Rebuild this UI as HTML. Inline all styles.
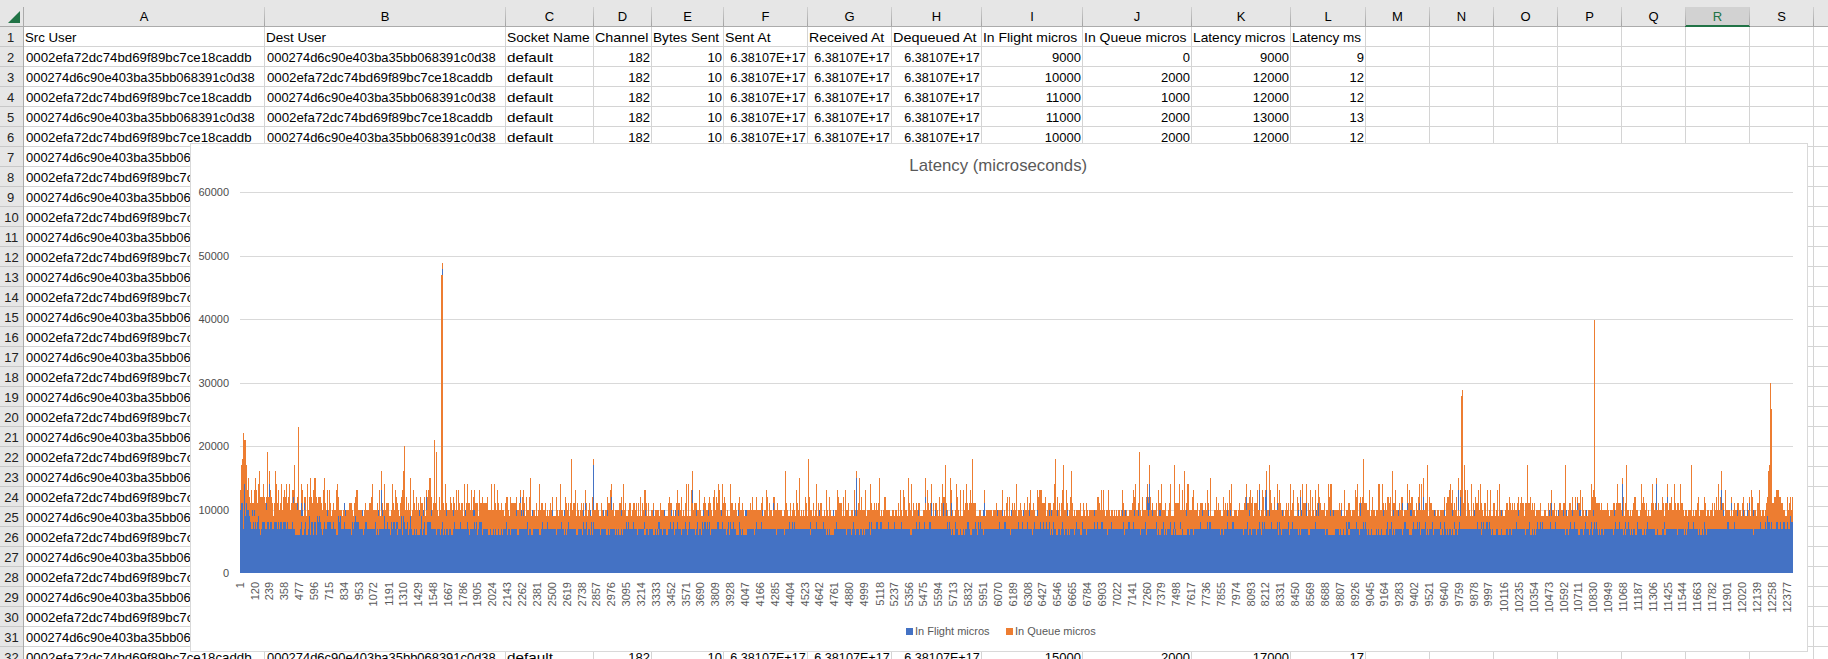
<!DOCTYPE html><html><head><meta charset="utf-8"><style>
html,body{margin:0;padding:0;}
body{width:1828px;height:659px;overflow:hidden;position:relative;background:#fff;font-family:"Liberation Sans",sans-serif;}
.a{position:absolute;}
.t{position:absolute;font-size:13px;line-height:15px;white-space:nowrap;color:#000;}
.l{transform-origin:0 0;}
.r{transform-origin:100% 0;}
.ch{position:absolute;font-size:13px;line-height:15px;color:#222;text-align:center;}
.rh{position:absolute;left:0;width:23px;font-size:13px;line-height:15px;color:#222;text-align:center;}
</style></head><body>
<div class="a" style="left:0;top:0;width:1828px;height:26px;background:#e6e6e6"></div>
<div class="a" style="left:0;top:26px;width:1828px;height:1px;background:#ababab"></div>
<div class="a" style="left:1686px;top:7px;width:63px;height:19px;background:#d2d2d2"></div>
<div class="a" style="left:1685px;top:25px;width:65px;height:2px;background:#217346"></div>
<div class="a" style="left:0;top:27px;width:23px;height:632px;background:#e6e6e6"></div>
<div class="a" style="left:23px;top:7px;width:1px;height:652px;background:#ababab"></div>
<svg class="a" style="left:0;top:0" width="23" height="26"><polygon points="8,23 20,23 20,11" fill="#217346"/></svg>
<div class="a" style="left:264px;top:7px;width:1px;height:19px;background:linear-gradient(#d0d0d0,#a3a3a3)"></div>
<div class="a" style="left:505px;top:7px;width:1px;height:19px;background:linear-gradient(#d0d0d0,#a3a3a3)"></div>
<div class="a" style="left:593px;top:7px;width:1px;height:19px;background:linear-gradient(#d0d0d0,#a3a3a3)"></div>
<div class="a" style="left:651px;top:7px;width:1px;height:19px;background:linear-gradient(#d0d0d0,#a3a3a3)"></div>
<div class="a" style="left:723px;top:7px;width:1px;height:19px;background:linear-gradient(#d0d0d0,#a3a3a3)"></div>
<div class="a" style="left:807px;top:7px;width:1px;height:19px;background:linear-gradient(#d0d0d0,#a3a3a3)"></div>
<div class="a" style="left:891px;top:7px;width:1px;height:19px;background:linear-gradient(#d0d0d0,#a3a3a3)"></div>
<div class="a" style="left:981px;top:7px;width:1px;height:19px;background:linear-gradient(#d0d0d0,#a3a3a3)"></div>
<div class="a" style="left:1082px;top:7px;width:1px;height:19px;background:linear-gradient(#d0d0d0,#a3a3a3)"></div>
<div class="a" style="left:1191px;top:7px;width:1px;height:19px;background:linear-gradient(#d0d0d0,#a3a3a3)"></div>
<div class="a" style="left:1290px;top:7px;width:1px;height:19px;background:linear-gradient(#d0d0d0,#a3a3a3)"></div>
<div class="a" style="left:1365px;top:7px;width:1px;height:19px;background:linear-gradient(#d0d0d0,#a3a3a3)"></div>
<div class="a" style="left:1429px;top:7px;width:1px;height:19px;background:linear-gradient(#d0d0d0,#a3a3a3)"></div>
<div class="a" style="left:1493px;top:7px;width:1px;height:19px;background:linear-gradient(#d0d0d0,#a3a3a3)"></div>
<div class="a" style="left:1557px;top:7px;width:1px;height:19px;background:linear-gradient(#d0d0d0,#a3a3a3)"></div>
<div class="a" style="left:1621px;top:7px;width:1px;height:19px;background:linear-gradient(#d0d0d0,#a3a3a3)"></div>
<div class="a" style="left:1685px;top:7px;width:1px;height:19px;background:linear-gradient(#d0d0d0,#a3a3a3)"></div>
<div class="a" style="left:1749px;top:7px;width:1px;height:19px;background:linear-gradient(#d0d0d0,#a3a3a3)"></div>
<div class="a" style="left:1813px;top:7px;width:1px;height:19px;background:linear-gradient(#d0d0d0,#a3a3a3)"></div>
<div class="ch" style="left:24px;width:240px;top:9px;color:#000">A</div>
<div class="ch" style="left:265px;width:240px;top:9px;color:#000">B</div>
<div class="ch" style="left:506px;width:87px;top:9px;color:#000">C</div>
<div class="ch" style="left:594px;width:57px;top:9px;color:#000">D</div>
<div class="ch" style="left:652px;width:71px;top:9px;color:#000">E</div>
<div class="ch" style="left:724px;width:83px;top:9px;color:#000">F</div>
<div class="ch" style="left:808px;width:83px;top:9px;color:#000">G</div>
<div class="ch" style="left:892px;width:89px;top:9px;color:#000">H</div>
<div class="ch" style="left:982px;width:100px;top:9px;color:#000">I</div>
<div class="ch" style="left:1083px;width:108px;top:9px;color:#000">J</div>
<div class="ch" style="left:1192px;width:98px;top:9px;color:#000">K</div>
<div class="ch" style="left:1291px;width:74px;top:9px;color:#000">L</div>
<div class="ch" style="left:1366px;width:63px;top:9px;color:#000">M</div>
<div class="ch" style="left:1430px;width:63px;top:9px;color:#000">N</div>
<div class="ch" style="left:1494px;width:63px;top:9px;color:#000">O</div>
<div class="ch" style="left:1558px;width:63px;top:9px;color:#000">P</div>
<div class="ch" style="left:1622px;width:63px;top:9px;color:#000">Q</div>
<div class="ch" style="left:1686px;width:63px;top:9px;color:#217346">R</div>
<div class="ch" style="left:1750px;width:63px;top:9px;color:#000">S</div>
<div class="a" style="left:264px;top:27px;width:1px;height:632px;background:#d4d4d4"></div>
<div class="a" style="left:505px;top:27px;width:1px;height:632px;background:#d4d4d4"></div>
<div class="a" style="left:593px;top:27px;width:1px;height:632px;background:#d4d4d4"></div>
<div class="a" style="left:651px;top:27px;width:1px;height:632px;background:#d4d4d4"></div>
<div class="a" style="left:723px;top:27px;width:1px;height:632px;background:#d4d4d4"></div>
<div class="a" style="left:807px;top:27px;width:1px;height:632px;background:#d4d4d4"></div>
<div class="a" style="left:891px;top:27px;width:1px;height:632px;background:#d4d4d4"></div>
<div class="a" style="left:981px;top:27px;width:1px;height:632px;background:#d4d4d4"></div>
<div class="a" style="left:1082px;top:27px;width:1px;height:632px;background:#d4d4d4"></div>
<div class="a" style="left:1191px;top:27px;width:1px;height:632px;background:#d4d4d4"></div>
<div class="a" style="left:1290px;top:27px;width:1px;height:632px;background:#d4d4d4"></div>
<div class="a" style="left:1365px;top:27px;width:1px;height:632px;background:#d4d4d4"></div>
<div class="a" style="left:1429px;top:27px;width:1px;height:632px;background:#d4d4d4"></div>
<div class="a" style="left:1493px;top:27px;width:1px;height:632px;background:#d4d4d4"></div>
<div class="a" style="left:1557px;top:27px;width:1px;height:632px;background:#d4d4d4"></div>
<div class="a" style="left:1621px;top:27px;width:1px;height:632px;background:#d4d4d4"></div>
<div class="a" style="left:1685px;top:27px;width:1px;height:632px;background:#d4d4d4"></div>
<div class="a" style="left:1749px;top:27px;width:1px;height:632px;background:#d4d4d4"></div>
<div class="a" style="left:1813px;top:27px;width:1px;height:632px;background:#d4d4d4"></div>
<div class="a" style="left:24px;top:46px;width:1804px;height:1px;background:#d4d4d4"></div>
<div class="a" style="left:0;top:46px;width:23px;height:1px;background:#c8c8c8"></div>
<div class="a" style="left:24px;top:66px;width:1804px;height:1px;background:#d4d4d4"></div>
<div class="a" style="left:0;top:66px;width:23px;height:1px;background:#c8c8c8"></div>
<div class="a" style="left:24px;top:86px;width:1804px;height:1px;background:#d4d4d4"></div>
<div class="a" style="left:0;top:86px;width:23px;height:1px;background:#c8c8c8"></div>
<div class="a" style="left:24px;top:106px;width:1804px;height:1px;background:#d4d4d4"></div>
<div class="a" style="left:0;top:106px;width:23px;height:1px;background:#c8c8c8"></div>
<div class="a" style="left:24px;top:126px;width:1804px;height:1px;background:#d4d4d4"></div>
<div class="a" style="left:0;top:126px;width:23px;height:1px;background:#c8c8c8"></div>
<div class="a" style="left:24px;top:146px;width:1804px;height:1px;background:#d4d4d4"></div>
<div class="a" style="left:0;top:146px;width:23px;height:1px;background:#c8c8c8"></div>
<div class="a" style="left:24px;top:166px;width:1804px;height:1px;background:#d4d4d4"></div>
<div class="a" style="left:0;top:166px;width:23px;height:1px;background:#c8c8c8"></div>
<div class="a" style="left:24px;top:186px;width:1804px;height:1px;background:#d4d4d4"></div>
<div class="a" style="left:0;top:186px;width:23px;height:1px;background:#c8c8c8"></div>
<div class="a" style="left:24px;top:206px;width:1804px;height:1px;background:#d4d4d4"></div>
<div class="a" style="left:0;top:206px;width:23px;height:1px;background:#c8c8c8"></div>
<div class="a" style="left:24px;top:226px;width:1804px;height:1px;background:#d4d4d4"></div>
<div class="a" style="left:0;top:226px;width:23px;height:1px;background:#c8c8c8"></div>
<div class="a" style="left:24px;top:246px;width:1804px;height:1px;background:#d4d4d4"></div>
<div class="a" style="left:0;top:246px;width:23px;height:1px;background:#c8c8c8"></div>
<div class="a" style="left:24px;top:266px;width:1804px;height:1px;background:#d4d4d4"></div>
<div class="a" style="left:0;top:266px;width:23px;height:1px;background:#c8c8c8"></div>
<div class="a" style="left:24px;top:286px;width:1804px;height:1px;background:#d4d4d4"></div>
<div class="a" style="left:0;top:286px;width:23px;height:1px;background:#c8c8c8"></div>
<div class="a" style="left:24px;top:306px;width:1804px;height:1px;background:#d4d4d4"></div>
<div class="a" style="left:0;top:306px;width:23px;height:1px;background:#c8c8c8"></div>
<div class="a" style="left:24px;top:326px;width:1804px;height:1px;background:#d4d4d4"></div>
<div class="a" style="left:0;top:326px;width:23px;height:1px;background:#c8c8c8"></div>
<div class="a" style="left:24px;top:346px;width:1804px;height:1px;background:#d4d4d4"></div>
<div class="a" style="left:0;top:346px;width:23px;height:1px;background:#c8c8c8"></div>
<div class="a" style="left:24px;top:366px;width:1804px;height:1px;background:#d4d4d4"></div>
<div class="a" style="left:0;top:366px;width:23px;height:1px;background:#c8c8c8"></div>
<div class="a" style="left:24px;top:386px;width:1804px;height:1px;background:#d4d4d4"></div>
<div class="a" style="left:0;top:386px;width:23px;height:1px;background:#c8c8c8"></div>
<div class="a" style="left:24px;top:406px;width:1804px;height:1px;background:#d4d4d4"></div>
<div class="a" style="left:0;top:406px;width:23px;height:1px;background:#c8c8c8"></div>
<div class="a" style="left:24px;top:426px;width:1804px;height:1px;background:#d4d4d4"></div>
<div class="a" style="left:0;top:426px;width:23px;height:1px;background:#c8c8c8"></div>
<div class="a" style="left:24px;top:446px;width:1804px;height:1px;background:#d4d4d4"></div>
<div class="a" style="left:0;top:446px;width:23px;height:1px;background:#c8c8c8"></div>
<div class="a" style="left:24px;top:466px;width:1804px;height:1px;background:#d4d4d4"></div>
<div class="a" style="left:0;top:466px;width:23px;height:1px;background:#c8c8c8"></div>
<div class="a" style="left:24px;top:486px;width:1804px;height:1px;background:#d4d4d4"></div>
<div class="a" style="left:0;top:486px;width:23px;height:1px;background:#c8c8c8"></div>
<div class="a" style="left:24px;top:506px;width:1804px;height:1px;background:#d4d4d4"></div>
<div class="a" style="left:0;top:506px;width:23px;height:1px;background:#c8c8c8"></div>
<div class="a" style="left:24px;top:526px;width:1804px;height:1px;background:#d4d4d4"></div>
<div class="a" style="left:0;top:526px;width:23px;height:1px;background:#c8c8c8"></div>
<div class="a" style="left:24px;top:546px;width:1804px;height:1px;background:#d4d4d4"></div>
<div class="a" style="left:0;top:546px;width:23px;height:1px;background:#c8c8c8"></div>
<div class="a" style="left:24px;top:566px;width:1804px;height:1px;background:#d4d4d4"></div>
<div class="a" style="left:0;top:566px;width:23px;height:1px;background:#c8c8c8"></div>
<div class="a" style="left:24px;top:586px;width:1804px;height:1px;background:#d4d4d4"></div>
<div class="a" style="left:0;top:586px;width:23px;height:1px;background:#c8c8c8"></div>
<div class="a" style="left:24px;top:606px;width:1804px;height:1px;background:#d4d4d4"></div>
<div class="a" style="left:0;top:606px;width:23px;height:1px;background:#c8c8c8"></div>
<div class="a" style="left:24px;top:626px;width:1804px;height:1px;background:#d4d4d4"></div>
<div class="a" style="left:0;top:626px;width:23px;height:1px;background:#c8c8c8"></div>
<div class="a" style="left:24px;top:646px;width:1804px;height:1px;background:#d4d4d4"></div>
<div class="a" style="left:0;top:646px;width:23px;height:1px;background:#c8c8c8"></div>
<div class="rh" style="top:30px;left:-1px">1</div>
<div class="rh" style="top:50px;left:-1px">2</div>
<div class="rh" style="top:70px;left:-1px">3</div>
<div class="rh" style="top:90px;left:-1px">4</div>
<div class="rh" style="top:110px;left:-1px">5</div>
<div class="rh" style="top:130px;left:-1px">6</div>
<div class="rh" style="top:150px;left:-1px">7</div>
<div class="rh" style="top:170px;left:-1px">8</div>
<div class="rh" style="top:190px;left:-1px">9</div>
<div class="rh" style="top:210px;left:0px">10</div>
<div class="rh" style="top:230px;left:0px">11</div>
<div class="rh" style="top:250px;left:0px">12</div>
<div class="rh" style="top:270px;left:0px">13</div>
<div class="rh" style="top:290px;left:0px">14</div>
<div class="rh" style="top:310px;left:0px">15</div>
<div class="rh" style="top:330px;left:0px">16</div>
<div class="rh" style="top:350px;left:0px">17</div>
<div class="rh" style="top:370px;left:0px">18</div>
<div class="rh" style="top:390px;left:0px">19</div>
<div class="rh" style="top:410px;left:0px">20</div>
<div class="rh" style="top:430px;left:0px">21</div>
<div class="rh" style="top:450px;left:0px">22</div>
<div class="rh" style="top:470px;left:0px">23</div>
<div class="rh" style="top:490px;left:0px">24</div>
<div class="rh" style="top:510px;left:0px">25</div>
<div class="rh" style="top:530px;left:0px">26</div>
<div class="rh" style="top:550px;left:0px">27</div>
<div class="rh" style="top:570px;left:0px">28</div>
<div class="rh" style="top:590px;left:0px">29</div>
<div class="rh" style="top:610px;left:0px">30</div>
<div class="rh" style="top:630px;left:0px">31</div>
<div class="rh" style="top:650px;left:0px">32</div>
<div class="t l" style="left:25px;top:30px;transform:scaleX(1.0192)">Src User</div>
<div class="t l" style="left:266px;top:30px;transform:scaleX(1.04)">Dest User</div>
<div class="t l" style="left:507px;top:30px;transform:scaleX(1.0608749999999998)">Socket Name</div>
<div class="t l" style="left:595px;top:30px;transform:scaleX(1.1024)">Channel</div>
<div class="t l" style="left:653px;top:30px;transform:scaleX(1.0506)">Bytes Sent</div>
<div class="t l" style="left:725px;top:30px;transform:scaleX(1.09)">Sent At</div>
<div class="t l" style="left:809px;top:30px;transform:scaleX(1.08498)">Received At</div>
<div class="t l" style="left:893px;top:30px;transform:scaleX(1.1118000000000001)">Dequeued At</div>
<div class="t l" style="left:983px;top:30px;transform:scaleX(1.07)">In Flight micros</div>
<div class="t l" style="left:1084px;top:30px;transform:scaleX(1.0758999999999999)">In Queue micros</div>
<div class="t l" style="left:1193px;top:30px;transform:scaleX(1.05545)">Latency micros</div>
<div class="t l" style="left:1292px;top:30px;transform:scaleX(1.04)">Latency ms</div>
<div class="t l" style="left:26px;top:50px;transform:scaleX(1.0196816)">0002efa72dc74bd69f89bc7ce18caddb</div>
<div class="t l" style="left:267px;top:50px;transform:scaleX(0.994896)">000274d6c90e403ba35bb068391c0d38</div>
<div class="t l" style="left:507px;top:50px;transform:scaleX(1.1760000000000002)">default</div>
<div class="t r" style="right:1178px;top:50px;transform:scaleX(1.0)">182</div>
<div class="t r" style="right:1106px;top:50px;transform:scaleX(1.0)">10</div>
<div class="t r" style="right:1022px;top:50px;transform:scaleX(0.97)">6.38107E+17</div>
<div class="t r" style="right:938px;top:50px;transform:scaleX(0.97)">6.38107E+17</div>
<div class="t r" style="right:848px;top:50px;transform:scaleX(0.97)">6.38107E+17</div>
<div class="t r" style="right:747px;top:50px;transform:scaleX(1.0)">9000</div>
<div class="t r" style="right:638px;top:50px;transform:scaleX(1.0)">0</div>
<div class="t r" style="right:539px;top:50px;transform:scaleX(1.0)">9000</div>
<div class="t r" style="right:464px;top:50px;transform:scaleX(1.0)">9</div>
<div class="t l" style="left:26px;top:70px;transform:scaleX(0.994896)">000274d6c90e403ba35bb068391c0d38</div>
<div class="t l" style="left:267px;top:70px;transform:scaleX(1.0196816)">0002efa72dc74bd69f89bc7ce18caddb</div>
<div class="t l" style="left:507px;top:70px;transform:scaleX(1.1760000000000002)">default</div>
<div class="t r" style="right:1178px;top:70px;transform:scaleX(1.0)">182</div>
<div class="t r" style="right:1106px;top:70px;transform:scaleX(1.0)">10</div>
<div class="t r" style="right:1022px;top:70px;transform:scaleX(0.97)">6.38107E+17</div>
<div class="t r" style="right:938px;top:70px;transform:scaleX(0.97)">6.38107E+17</div>
<div class="t r" style="right:848px;top:70px;transform:scaleX(0.97)">6.38107E+17</div>
<div class="t r" style="right:747px;top:70px;transform:scaleX(1.0)">10000</div>
<div class="t r" style="right:638px;top:70px;transform:scaleX(1.0)">2000</div>
<div class="t r" style="right:539px;top:70px;transform:scaleX(1.0)">12000</div>
<div class="t r" style="right:464px;top:70px;transform:scaleX(1.0)">12</div>
<div class="t l" style="left:26px;top:90px;transform:scaleX(1.0196816)">0002efa72dc74bd69f89bc7ce18caddb</div>
<div class="t l" style="left:267px;top:90px;transform:scaleX(0.994896)">000274d6c90e403ba35bb068391c0d38</div>
<div class="t l" style="left:507px;top:90px;transform:scaleX(1.1760000000000002)">default</div>
<div class="t r" style="right:1178px;top:90px;transform:scaleX(1.0)">182</div>
<div class="t r" style="right:1106px;top:90px;transform:scaleX(1.0)">10</div>
<div class="t r" style="right:1022px;top:90px;transform:scaleX(0.97)">6.38107E+17</div>
<div class="t r" style="right:938px;top:90px;transform:scaleX(0.97)">6.38107E+17</div>
<div class="t r" style="right:848px;top:90px;transform:scaleX(0.97)">6.38107E+17</div>
<div class="t r" style="right:747px;top:90px;transform:scaleX(1.0)">11000</div>
<div class="t r" style="right:638px;top:90px;transform:scaleX(1.0)">1000</div>
<div class="t r" style="right:539px;top:90px;transform:scaleX(1.0)">12000</div>
<div class="t r" style="right:464px;top:90px;transform:scaleX(1.0)">12</div>
<div class="t l" style="left:26px;top:110px;transform:scaleX(0.994896)">000274d6c90e403ba35bb068391c0d38</div>
<div class="t l" style="left:267px;top:110px;transform:scaleX(1.0196816)">0002efa72dc74bd69f89bc7ce18caddb</div>
<div class="t l" style="left:507px;top:110px;transform:scaleX(1.1760000000000002)">default</div>
<div class="t r" style="right:1178px;top:110px;transform:scaleX(1.0)">182</div>
<div class="t r" style="right:1106px;top:110px;transform:scaleX(1.0)">10</div>
<div class="t r" style="right:1022px;top:110px;transform:scaleX(0.97)">6.38107E+17</div>
<div class="t r" style="right:938px;top:110px;transform:scaleX(0.97)">6.38107E+17</div>
<div class="t r" style="right:848px;top:110px;transform:scaleX(0.97)">6.38107E+17</div>
<div class="t r" style="right:747px;top:110px;transform:scaleX(1.0)">11000</div>
<div class="t r" style="right:638px;top:110px;transform:scaleX(1.0)">2000</div>
<div class="t r" style="right:539px;top:110px;transform:scaleX(1.0)">13000</div>
<div class="t r" style="right:464px;top:110px;transform:scaleX(1.0)">13</div>
<div class="t l" style="left:26px;top:130px;transform:scaleX(1.0196816)">0002efa72dc74bd69f89bc7ce18caddb</div>
<div class="t l" style="left:267px;top:130px;transform:scaleX(0.994896)">000274d6c90e403ba35bb068391c0d38</div>
<div class="t l" style="left:507px;top:130px;transform:scaleX(1.1760000000000002)">default</div>
<div class="t r" style="right:1178px;top:130px;transform:scaleX(1.0)">182</div>
<div class="t r" style="right:1106px;top:130px;transform:scaleX(1.0)">10</div>
<div class="t r" style="right:1022px;top:130px;transform:scaleX(0.97)">6.38107E+17</div>
<div class="t r" style="right:938px;top:130px;transform:scaleX(0.97)">6.38107E+17</div>
<div class="t r" style="right:848px;top:130px;transform:scaleX(0.97)">6.38107E+17</div>
<div class="t r" style="right:747px;top:130px;transform:scaleX(1.0)">10000</div>
<div class="t r" style="right:638px;top:130px;transform:scaleX(1.0)">2000</div>
<div class="t r" style="right:539px;top:130px;transform:scaleX(1.0)">12000</div>
<div class="t r" style="right:464px;top:130px;transform:scaleX(1.0)">12</div>
<div class="t l" style="left:26px;top:650px;transform:scaleX(1.0196816)">0002efa72dc74bd69f89bc7ce18caddb</div>
<div class="t l" style="left:267px;top:650px;transform:scaleX(0.994896)">000274d6c90e403ba35bb068391c0d38</div>
<div class="t l" style="left:507px;top:650px;transform:scaleX(1.1760000000000002)">default</div>
<div class="t r" style="right:1178px;top:650px;transform:scaleX(1.0)">182</div>
<div class="t r" style="right:1106px;top:650px;transform:scaleX(1.0)">10</div>
<div class="t r" style="right:1022px;top:650px;transform:scaleX(0.97)">6.38107E+17</div>
<div class="t r" style="right:938px;top:650px;transform:scaleX(0.97)">6.38107E+17</div>
<div class="t r" style="right:848px;top:650px;transform:scaleX(0.97)">6.38107E+17</div>
<div class="t r" style="right:747px;top:650px;transform:scaleX(1.0)">15000</div>
<div class="t r" style="right:638px;top:650px;transform:scaleX(1.0)">2000</div>
<div class="t r" style="right:539px;top:650px;transform:scaleX(1.0)">17000</div>
<div class="t r" style="right:464px;top:650px;transform:scaleX(1.0)">17</div>
<div class="t l" style="left:26px;top:150px;transform:scaleX(0.994896)">000274d6c90e403ba35bb068391c0d38</div>
<div class="t l" style="left:26px;top:170px;transform:scaleX(1.0196816)">0002efa72dc74bd69f89bc7ce18caddb</div>
<div class="t l" style="left:26px;top:190px;transform:scaleX(0.994896)">000274d6c90e403ba35bb068391c0d38</div>
<div class="t l" style="left:26px;top:210px;transform:scaleX(1.0196816)">0002efa72dc74bd69f89bc7ce18caddb</div>
<div class="t l" style="left:26px;top:230px;transform:scaleX(0.994896)">000274d6c90e403ba35bb068391c0d38</div>
<div class="t l" style="left:26px;top:250px;transform:scaleX(1.0196816)">0002efa72dc74bd69f89bc7ce18caddb</div>
<div class="t l" style="left:26px;top:270px;transform:scaleX(0.994896)">000274d6c90e403ba35bb068391c0d38</div>
<div class="t l" style="left:26px;top:290px;transform:scaleX(1.0196816)">0002efa72dc74bd69f89bc7ce18caddb</div>
<div class="t l" style="left:26px;top:310px;transform:scaleX(0.994896)">000274d6c90e403ba35bb068391c0d38</div>
<div class="t l" style="left:26px;top:330px;transform:scaleX(1.0196816)">0002efa72dc74bd69f89bc7ce18caddb</div>
<div class="t l" style="left:26px;top:350px;transform:scaleX(0.994896)">000274d6c90e403ba35bb068391c0d38</div>
<div class="t l" style="left:26px;top:370px;transform:scaleX(1.0196816)">0002efa72dc74bd69f89bc7ce18caddb</div>
<div class="t l" style="left:26px;top:390px;transform:scaleX(0.994896)">000274d6c90e403ba35bb068391c0d38</div>
<div class="t l" style="left:26px;top:410px;transform:scaleX(1.0196816)">0002efa72dc74bd69f89bc7ce18caddb</div>
<div class="t l" style="left:26px;top:430px;transform:scaleX(0.994896)">000274d6c90e403ba35bb068391c0d38</div>
<div class="t l" style="left:26px;top:450px;transform:scaleX(1.0196816)">0002efa72dc74bd69f89bc7ce18caddb</div>
<div class="t l" style="left:26px;top:470px;transform:scaleX(0.994896)">000274d6c90e403ba35bb068391c0d38</div>
<div class="t l" style="left:26px;top:490px;transform:scaleX(1.0196816)">0002efa72dc74bd69f89bc7ce18caddb</div>
<div class="t l" style="left:26px;top:510px;transform:scaleX(0.994896)">000274d6c90e403ba35bb068391c0d38</div>
<div class="t l" style="left:26px;top:530px;transform:scaleX(1.0196816)">0002efa72dc74bd69f89bc7ce18caddb</div>
<div class="t l" style="left:26px;top:550px;transform:scaleX(0.994896)">000274d6c90e403ba35bb068391c0d38</div>
<div class="t l" style="left:26px;top:570px;transform:scaleX(1.0196816)">0002efa72dc74bd69f89bc7ce18caddb</div>
<div class="t l" style="left:26px;top:590px;transform:scaleX(0.994896)">000274d6c90e403ba35bb068391c0d38</div>
<div class="t l" style="left:26px;top:610px;transform:scaleX(1.0196816)">0002efa72dc74bd69f89bc7ce18caddb</div>
<div class="t l" style="left:26px;top:630px;transform:scaleX(0.994896)">000274d6c90e403ba35bb068391c0d38</div>
<div class="a" style="left:190px;top:143px;width:1616px;height:507px;background:#fff;border:1px solid #d9d9d9"></div>
<div class="a" style="left:0;width:1828px;top:156px;text-align:center"><span style="display:inline-block;font-size:17px;line-height:20px;color:#595959;transform:scaleX(0.985);margin-left:169px">Latency (microseconds)</span></div>
<svg class="a" style="left:0;top:0" width="1828" height="659" shape-rendering="crispEdges"><rect x="240" y="510" width="1553" height="1" fill="#d9d9d9"/><rect x="240" y="446" width="1553" height="1" fill="#d9d9d9"/><rect x="240" y="383" width="1553" height="1" fill="#d9d9d9"/><rect x="240" y="319" width="1553" height="1" fill="#d9d9d9"/><rect x="240" y="256" width="1553" height="1" fill="#d9d9d9"/><rect x="240" y="192" width="1553" height="1" fill="#d9d9d9"/><path d="M240 573V490H241V465H242V459H243V433H244V440H246V465H247V490H248V478H249V497H250V503H251V490H252V503H254V490H255V478H256V490H257V503H258V484H259V471H260V497H263V484H264V497H265V503H266V497H267V452H268V497H269V471H270V490H271V497H272V503H273V516H274V503H275V471H276V484H277V503H278V490H279V510H280V503H281V484H282V510H283V497H284V490H285V497H286V484H287V503H288V497H289V484H290V510H291V503H292V490H294V465H295V503H297V497H298V427H299V510H301V484H302V490H303V516H304V497H306V516H307V484H308V510H309V497H310V478H311V497H312V503H313V490H314V478H316V497H317V503H318V497H321V503H322V510H323V490H324V478H325V503H326V510H327V490H328V510H329V490H330V503H331V516H332V510H333V503H334V510H336V490H337V484H338V497H339V510H342V516H343V510H344V503H345V510H349V503H352V510H353V516H354V503H355V497H356V490H358V510H363V516H364V510H365V503H366V510H369V503H371V497H372V484H373V510H377V503H378V510H379V490H380V516H381V471H382V503H383V510H384V484H385V510H386V503H389V516H391V510H392V484H393V503H394V510H395V490H396V497H397V503H398V510H399V516H400V503H401V497H402V490H403V471H404V446H405V510H406V497H407V510H408V503H409V510H410V478H411V516H412V510H413V490H414V503H415V510H416V497H417V510H418V503H419V510H420V497H421V503H423V510H424V497H425V516H426V490H427V497H428V490H429V478H431V497H432V510H433V503H434V440H435V503H436V452H437V510H438V516H439V497H440V510H441V275H442V263H443V503H444V510H445V484H446V503H447V510H450V497H451V503H452V510H453V497H454V503H455V510H456V490H457V510H458V490H459V503H460V510H461V503H463V516H464V484H465V510H466V503H467V484H468V503H470V510H471V490H472V510H473V497H474V490H475V503H478V516H479V490H480V503H482V497H483V503H487V497H488V510H491V484H492V510H494V484H495V503H496V510H497V490H498V503H499V510H501V503H502V510H504V516H505V503H506V497H508V510H509V516H510V497H511V503H516V497H517V510H519V503H520V490H521V510H522V497H523V490H524V503H525V516H526V497H527V510H529V497H530V478H531V516H532V510H535V516H536V503H537V516H538V510H539V484H540V510H541V503H543V510H545V503H546V516H547V510H548V516H549V510H550V503H551V510H552V497H553V516H556V497H557V510H558V516H559V510H560V484H561V510H563V516H564V510H565V497H566V503H567V510H568V503H569V516H570V503H571V459H572V510H573V503H575V490H576V516H577V503H578V510H579V516H580V510H581V503H582V510H583V503H584V516H585V490H586V503H587V516H588V510H589V503H590V510H591V516H592V497H593V459H594V510H596V503H598V510H599V516H601V503H602V510H604V516H605V510H607V497H608V503H610V490H611V484H612V510H613V503H614V516H615V510H619V503H621V497H622V510H623V484H624V510H625V503H626V516H628V510H629V503H631V516H632V510H633V503H635V510H636V503H637V516H638V503H639V516H640V497H641V516H642V503H643V510H644V490H646V503H647V516H648V503H649V516H651V510H653V503H654V516H655V510H659V516H660V503H661V510H665V516H668V503H669V497H670V503H672V516H673V510H674V516H675V510H676V503H677V490H678V503H680V510H681V497H682V516H683V510H684V516H685V503H686V484H687V516H688V484H689V516H691V490H692V471H693V510H694V503H697V510H699V490H700V510H701V516H703V503H704V497H705V503H706V510H708V503H709V497H710V503H711V510H712V516H713V497H714V490H715V510H716V497H717V503H718V484H719V490H720V510H722V484H723V503H724V497H725V503H726V516H727V510H728V516H730V484H731V503H733V510H735V503H736V510H737V516H738V503H739V497H740V510H742V503H743V510H744V516H745V510H750V503H751V510H752V497H753V510H756V497H757V510H761V503H762V497H763V516H764V510H766V490H767V497H768V516H769V503H770V510H772V516H773V497H775V510H777V503H778V510H782V516H784V510H785V471H786V503H787V510H788V516H790V503H791V516H792V510H793V503H794V510H795V516H796V490H797V503H798V510H799V478H800V516H801V510H802V516H803V510H804V516H805V497H806V503H807V516H808V459H809V497H810V510H812V516H813V503H814V516H815V510H816V484H817V516H818V503H819V510H820V503H822V516H824V510H825V516H826V490H827V510H828V516H829V497H830V510H831V516H833V510H834V516H835V510H837V490H838V497H839V503H842V516H843V497H844V516H845V490H846V510H848V503H849V516H851V510H853V516H854V490H855V510H856V471H857V510H858V503H859V478H860V510H861V497H862V510H865V490H866V516H867V510H870V484H871V503H872V510H874V503H875V510H876V503H877V510H878V503H879V478H880V516H881V510H882V516H883V510H884V497H886V510H890V516H892V510H894V516H895V510H897V516H898V503H899V516H900V490H901V510H902V516H903V490H904V497H905V510H907V516H908V478H909V503H910V510H911V484H912V516H913V503H914V510H916V503H917V510H918V503H920V516H923V510H925V478H926V510H927V490H928V503H929V510H930V503H931V484H932V516H933V503H934V516H935V503H937V510H938V516H939V497H940V516H941V503H942V484H943V497H945V465H946V503H947V510H948V516H950V478H951V490H952V510H953V516H955V510H956V484H957V497H958V510H959V516H960V490H961V516H963V490H964V510H965V503H966V484H967V503H968V510H969V503H970V490H971V503H972V459H973V503H976V516H979V510H981V516H983V510H984V490H985V516H986V510H992V516H993V510H996V503H997V510H1002V490H1003V516H1004V510H1005V516H1006V503H1007V497H1008V516H1009V497H1010V516H1011V510H1012V503H1013V510H1014V503H1015V510H1016V484H1017V516H1018V510H1020V503H1021V510H1022V516H1023V510H1024V503H1025V510H1027V497H1028V510H1029V503H1030V490H1031V510H1033V503H1034V510H1035V516H1037V490H1038V497H1039V490H1042V503H1045V497H1046V516H1047V510H1048V503H1051V510H1053V503H1054V484H1055V459H1056V510H1057V497H1058V510H1059V503H1060V516H1061V503H1062V490H1063V465H1064V510H1066V490H1067V503H1068V516H1069V510H1070V497H1071V471H1072V503H1073V516H1074V510H1075V516H1076V510H1080V503H1081V516H1083V503H1084V510H1085V516H1086V503H1087V510H1088V516H1089V510H1097V497H1099V503H1100V510H1101V490H1102V510H1103V490H1104V510H1105V516H1106V510H1108V490H1109V510H1110V516H1111V510H1113V516H1114V510H1115V516H1116V510H1117V516H1118V510H1120V516H1121V510H1122V490H1123V503H1124V510H1127V516H1129V510H1132V503H1133V490H1134V497H1135V484H1136V510H1138V503H1139V452H1140V510H1141V516H1142V497H1143V510H1146V497H1147V484H1148V497H1149V465H1150V497H1151V510H1152V503H1153V510H1156V503H1157V516H1158V490H1159V503H1161V484H1162V510H1165V503H1166V516H1168V510H1169V503H1170V484H1171V516H1174V465H1175V503H1179V484H1180V510H1182V490H1183V510H1184V471H1185V510H1186V503H1187V484H1189V510H1192V497H1193V490H1194V510H1197V503H1198V516H1199V510H1200V503H1203V510H1205V503H1206V510H1207V490H1208V503H1209V516H1210V478H1211V516H1214V510H1216V497H1217V510H1218V503H1219V510H1221V516H1223V497H1224V510H1225V503H1226V510H1227V503H1228V510H1229V490H1230V503H1231V484H1232V516H1234V510H1237V516H1238V510H1239V503H1240V510H1244V503H1245V497H1246V484H1247V503H1249V497H1250V490H1251V503H1252V497H1253V516H1254V503H1257V490H1258V510H1259V484H1260V516H1261V510H1262V490H1263V497H1264V516H1265V490H1266V471H1267V510H1269V465H1270V490H1271V503H1272V510H1274V497H1275V510H1277V484H1278V503H1279V490H1280V503H1281V510H1284V516H1285V510H1286V503H1287V510H1288V503H1289V516H1290V484H1291V510H1292V503H1293V490H1294V516H1297V497H1298V503H1299V516H1300V490H1301V510H1302V484H1303V503H1306V484H1307V516H1308V503H1309V510H1310V490H1311V516H1312V497H1313V510H1314V516H1315V490H1316V510H1317V503H1318V484H1319V497H1320V503H1321V510H1324V503H1325V516H1326V510H1328V484H1329V497H1330V484H1332V510H1339V503H1340V510H1341V503H1342V516H1344V490H1345V516H1346V510H1348V503H1350V510H1351V516H1352V510H1355V490H1356V497H1357V484H1358V516H1359V503H1360V497H1361V503H1362V497H1363V459H1364V503H1367V510H1369V490H1370V516H1371V510H1372V497H1373V510H1375V516H1376V510H1378V484H1380V510H1382V484H1383V503H1384V510H1385V503H1386V510H1387V497H1389V503H1390V497H1391V516H1392V471H1393V503H1395V490H1396V510H1399V503H1400V510H1401V497H1403V516H1404V510H1407V484H1408V503H1409V490H1410V503H1411V497H1413V510H1415V516H1416V503H1417V510H1418V497H1419V484H1420V510H1421V484H1422V510H1423V478H1424V510H1425V503H1427V465H1428V516H1429V497H1430V503H1432V510H1436V516H1437V510H1439V516H1440V510H1444V497H1445V516H1446V503H1447V497H1449V490H1450V484H1451V503H1452V490H1453V510H1454V503H1455V510H1456V497H1457V516H1458V478H1459V516H1460V490H1461V396H1462V390H1463V503H1464V465H1465V490H1466V516H1467V490H1468V503H1469V510H1470V516H1471V484H1472V516H1473V503H1474V510H1475V497H1476V503H1478V490H1479V510H1480V484H1481V503H1482V510H1483V516H1484V503H1486V516H1487V490H1488V516H1489V510H1490V490H1491V516H1493V503H1495V516H1496V510H1497V490H1498V516H1499V484H1500V510H1503V516H1505V510H1506V503H1508V510H1509V497H1510V503H1511V510H1512V503H1513V510H1514V503H1515V510H1517V503H1518V497H1519V510H1520V503H1521V497H1522V503H1524V516H1525V503H1527V465H1528V503H1530V497H1531V510H1532V503H1533V510H1534V503H1535V516H1536V510H1540V503H1541V516H1544V510H1546V516H1548V503H1549V510H1550V503H1551V490H1552V510H1554V503H1555V516H1556V510H1557V516H1558V510H1559V503H1561V510H1563V503H1565V465H1566V510H1567V516H1568V510H1569V503H1571V510H1572V497H1573V510H1575V497H1576V510H1577V497H1578V503H1580V490H1581V516H1582V497H1583V510H1584V516H1585V510H1587V516H1588V510H1591V484H1592V497H1593V490H1594V320H1595V497H1596V503H1600V510H1601V503H1602V510H1607V503H1608V510H1609V516H1610V510H1613V503H1615V510H1616V503H1617V484H1618V503H1621V510H1622V478H1623V497H1624V516H1625V503H1626V465H1627V510H1629V516H1630V510H1631V516H1632V510H1633V503H1634V497H1636V510H1638V516H1640V510H1641V484H1642V503H1643V497H1644V503H1645V510H1646V503H1647V516H1648V510H1649V516H1651V503H1652V484H1653V503H1654V510H1655V503H1656V478H1657V510H1658V503H1659V510H1662V497H1663V503H1664V516H1665V503H1667V484H1668V510H1669V503H1671V497H1672V510H1674V484H1675V503H1676V510H1677V503H1679V510H1680V484H1681V503H1683V510H1684V516H1685V510H1687V516H1688V510H1691V465H1692V516H1693V510H1694V516H1695V510H1697V503H1698V497H1699V516H1700V510H1704V497H1705V503H1706V516H1707V510H1709V516H1710V510H1712V503H1713V516H1714V503H1715V510H1716V497H1717V510H1718V484H1719V510H1720V497H1721V471H1722V503H1724V516H1725V490H1726V510H1730V516H1731V497H1732V516H1733V510H1734V503H1735V510H1737V503H1739V510H1741V516H1742V503H1743V497H1744V510H1745V516H1747V503H1748V510H1749V497H1750V516H1751V490H1752V497H1753V510H1756V516H1757V503H1759V490H1760V510H1761V516H1762V510H1764V516H1765V510H1766V503H1767V497H1768V471H1769V465H1770V383H1771V409H1772V503H1774V497H1776V490H1779V497H1781V503H1783V510H1785V516H1787V497H1788V510H1789V503H1790V497H1791V510H1792V497H1793V573Z" fill="#ed7d31"/>
<path d="M240 573V510H241V503H243V529H244V484H245V516H246V503H247V510H249V516H250V522H251V529H253V522H254V529H255V522H256V529H257V522H258V516H259V529H260V535H261V529H262V522H265V529H267V522H269V529H270V522H272V529H274V522H277V529H278V522H279V529H280V522H282V529H283V522H286V529H287V522H288V529H292V522H293V529H295V535H300V529H301V522H302V535H304V529H305V522H306V535H308V529H309V516H310V535H311V522H313V535H314V522H316V535H317V516H318V522H319V516H320V522H321V529H322V535H323V529H324V522H325V529H327V522H331V529H333V522H334V529H336V535H338V516H339V522H340V516H341V529H344V522H345V529H351V535H352V522H353V529H354V522H355V516H356V522H359V529H363V535H364V529H365V522H367V529H375V522H376V535H377V529H378V535H379V529H384V516H385V529H387V522H388V529H390V535H391V522H392V529H393V522H395V529H396V522H397V535H398V529H401V516H402V535H403V516H404V522H405V529H407V522H408V535H409V529H410V516H411V529H412V535H414V529H415V535H416V529H417V535H420V529H421V516H422V535H423V529H424V522H425V535H427V522H431V529H436V535H437V529H440V535H441V529H442V522H443V535H444V529H445V535H446V529H448V535H449V529H451V535H453V529H454V522H455V529H460V522H461V529H467V522H468V529H469V535H470V529H474V522H475V529H476V522H477V535H478V529H479V522H482V535H483V529H488V535H490V529H491V535H493V529H494V535H495V529H496V535H498V529H499V535H501V529H502V535H503V529H506V522H507V535H508V529H510V535H511V529H517V535H519V529H527V522H528V535H529V529H531V535H533V529H539V535H541V529H542V522H543V529H547V522H548V529H556V535H557V529H561V522H562V529H564V535H565V529H566V535H567V529H568V522H569V529H576V535H578V529H582V535H583V522H584V529H586V522H587V535H588V529H590V535H591V522H592V535H593V522H594V529H600V535H601V529H606V535H608V529H609V535H610V529H615V535H616V529H617V535H618V529H619V535H621V529H622V535H623V529H626V522H627V529H628V522H629V529H633V522H634V529H637V535H638V529H644V535H646V529H648V535H649V529H653V535H655V529H656V535H657V529H658V535H659V522H660V529H662V535H663V529H666V535H668V529H670V522H671V529H673V522H674V535H675V529H677V522H678V529H681V535H682V529H685V522H686V529H687V535H688V529H689V522H690V529H695V535H696V529H697V522H698V535H699V529H701V535H702V522H703V529H704V522H706V529H707V522H708V529H709V522H710V535H711V529H717V522H719V529H722V522H723V529H726V535H727V529H728V522H729V535H730V522H731V529H733V522H734V529H736V535H739V522H740V529H741V535H742V529H743V535H747V529H754V535H755V529H756V522H757V529H761V522H762V529H776V535H777V529H784V535H785V529H789V522H790V529H792V522H793V529H794V522H795V529H810V535H811V529H816V522H817V529H823V522H824V529H826V535H827V529H828V535H829V529H830V535H834V529H836V522H837V529H846V535H847V529H851V535H852V529H853V522H854V529H855V535H856V529H859V535H860V529H862V535H863V529H864V535H865V529H869V522H870V535H871V522H872V529H876V522H878V529H880V522H882V529H888V522H889V529H894V522H895V529H901V522H902V529H910V535H912V529H916V522H917V529H919V522H920V529H924V522H925V529H929V522H931V529H947V522H948V529H949V522H950V529H951V535H952V529H953V535H955V522H956V529H958V535H960V529H961V535H963V529H964V535H965V529H967V522H969V529H970V535H972V529H975V522H976V529H977V535H978V522H979V529H980V522H981V529H983V535H984V529H999V522H1000V529H1004V522H1006V529H1010V535H1011V529H1018V522H1019V529H1022V522H1023V529H1027V522H1028V529H1032V535H1033V529H1034V522H1035V529H1040V522H1041V529H1043V522H1044V529H1046V522H1047V529H1049V522H1050V535H1051V529H1052V535H1053V522H1054V529H1056V535H1058V529H1060V535H1061V529H1062V522H1063V529H1064V535H1065V529H1067V535H1068V529H1069V535H1070V529H1074V535H1075V529H1076V522H1077V529H1080V535H1082V522H1083V529H1086V535H1087V529H1094V522H1095V529H1097V522H1098V529H1101V522H1103V529H1107V535H1108V529H1111V522H1112V529H1123V522H1124V535H1125V529H1128V522H1130V529H1133V522H1134V529H1140V535H1141V529H1145V522H1146V535H1147V529H1156V522H1157V535H1158V529H1159V535H1161V529H1163V522H1164V535H1165V529H1166V535H1167V529H1170V522H1171V535H1173V529H1174V535H1175V529H1176V535H1182V529H1183V535H1187V529H1189V535H1190V529H1193V535H1194V529H1200V522H1201V529H1207V522H1208V529H1209V522H1211V529H1220V535H1221V529H1223V535H1224V529H1227V522H1228V529H1232V522H1234V529H1243V535H1244V529H1247V522H1248V535H1249V529H1251V535H1252V529H1256V535H1257V529H1259V522H1260V529H1261V535H1262V522H1263V529H1264V522H1265V529H1271V522H1272V529H1277V522H1278V535H1279V522H1280V529H1281V535H1282V529H1288V522H1289V535H1290V529H1292V522H1293V529H1298V535H1299V529H1300V535H1301V529H1308V535H1310V529H1315V522H1316V529H1325V535H1326V529H1328V535H1335V529H1339V535H1340V529H1341V535H1343V529H1344V535H1346V522H1347V529H1348V535H1350V529H1356V522H1357V529H1359V535H1360V529H1363V522H1364V529H1365V522H1366V529H1367V535H1368V529H1369V535H1371V529H1372V535H1376V529H1377V535H1378V529H1379V535H1381V529H1382V535H1386V529H1387V522H1388V535H1389V529H1391V522H1392V535H1393V529H1394V535H1395V529H1402V535H1403V529H1404V522H1406V529H1409V535H1412V529H1413V522H1414V529H1417V522H1418V529H1419V522H1420V535H1421V529H1425V522H1426V535H1427V529H1428V535H1429V529H1432V522H1433V535H1434V529H1440V535H1442V529H1443V535H1444V522H1445V529H1446V535H1447V529H1448V535H1449V529H1451V535H1452V529H1453V535H1455V529H1457V535H1458V529H1459V522H1460V529H1477V522H1478V529H1481V535H1482V529H1483V522H1484V529H1486V522H1488V529H1489V522H1490V529H1491V535H1492V529H1493V535H1496V529H1498V535H1501V529H1502V535H1506V529H1508V535H1509V529H1511V535H1512V529H1516V522H1517V529H1525V535H1526V529H1529V522H1530V535H1532V529H1533V535H1534V529H1535V535H1536V529H1537V522H1538V529H1540V522H1541V529H1542V522H1543V529H1550V522H1551V529H1555V522H1556V529H1565V535H1566V529H1568V535H1569V529H1570V522H1571V529H1574V522H1575V529H1578V535H1580V529H1583V535H1584V529H1585V522H1586V529H1589V535H1590V529H1591V522H1592V535H1593V529H1594V522H1595V529H1596V522H1597V529H1598V535H1599V529H1600V535H1601V529H1603V535H1604V529H1613V535H1614V529H1615V522H1616V529H1619V522H1620V529H1623V535H1624V529H1625V535H1626V529H1628V522H1629V529H1630V535H1631V529H1632V535H1633V529H1635V535H1637V522H1638V529H1642V535H1644V529H1645V535H1646V529H1647V522H1648V529H1655V535H1657V529H1658V535H1662V529H1664V535H1666V529H1677V535H1678V529H1684V535H1685V529H1686V535H1687V529H1688V522H1689V529H1693V522H1694V529H1698V535H1699V529H1700V535H1702V529H1703V535H1704V522H1705V529H1706V535H1707V529H1727V522H1729V529H1734V522H1735V529H1753V535H1754V529H1760V522H1761V529H1765V522H1766V529H1767V516H1768V522H1770V529H1771V522H1772V529H1776V522H1778V529H1780V522H1781V529H1783V522H1785V529H1787V522H1788V529H1790V516H1791V522H1793V573Z" fill="#4472c4"/>
<path d="M252 510h1v6h-1zM254 510h1v6h-1zM266 503h1v7h-1zM269 484h1v13h-1zM293 497h1v6h-1zM297 503h1v7h-1zM301 503h1v13h-1zM302 510h1v6h-1zM304 503h1v7h-1zM327 510h1v6h-1zM344 503h1v7h-1zM345 510h1v6h-1zM362 510h1v6h-1zM378 510h1v6h-1zM381 490h1v20h-1zM382 510h1v6h-1zM397 522h1v7h-1zM419 510h1v6h-1zM423 510h1v6h-1zM426 497h1v13h-1zM431 510h1v6h-1zM442 269h1v6h-1zM446 510h1v6h-1zM453 510h1v6h-1zM465 510h1v6h-1zM473 510h1v6h-1zM474 510h1v6h-1zM516 510h1v6h-1zM520 497h1v6h-1zM521 510h1v6h-1zM523 510h1v6h-1zM532 510h1v6h-1zM552 510h1v6h-1zM564 510h1v6h-1zM583 510h1v6h-1zM585 503h1v7h-1zM590 510h1v6h-1zM593 465h1v45h-1zM603 510h1v6h-1zM607 510h1v6h-1zM611 497h1v13h-1zM621 510h1v6h-1zM644 522h1v7h-1zM645 510h1v6h-1zM653 510h1v6h-1zM658 522h1v7h-1zM664 510h1v6h-1zM671 510h1v6h-1zM675 510h1v6h-1zM678 510h1v6h-1zM692 490h1v13h-1zM696 510h1v6h-1zM703 510h1v6h-1zM708 510h1v6h-1zM721 510h1v6h-1zM738 510h1v6h-1zM745 510h1v6h-1zM746 510h1v6h-1zM762 510h1v6h-1zM773 503h1v7h-1zM810 522h1v7h-1zM819 510h1v6h-1zM833 510h1v6h-1zM854 510h1v6h-1zM856 478h1v38h-1zM918 510h1v6h-1zM925 497h1v6h-1zM931 503h1v13h-1zM935 510h1v6h-1zM943 503h1v13h-1zM946 510h1v6h-1zM951 503h1v13h-1zM983 510h1v6h-1zM984 503h1v13h-1zM997 510h1v6h-1zM1002 510h1v6h-1zM1011 510h1v6h-1zM1023 510h1v6h-1zM1029 510h1v6h-1zM1037 510h1v6h-1zM1049 510h1v6h-1zM1051 510h1v6h-1zM1057 510h1v6h-1zM1067 510h1v6h-1zM1094 510h1v6h-1zM1122 510h1v6h-1zM1125 510h1v6h-1zM1134 510h1v6h-1zM1138 510h1v6h-1zM1147 497h1v13h-1zM1148 503h1v13h-1zM1149 484h1v26h-1zM1152 510h1v6h-1zM1159 510h1v6h-1zM1160 510h1v6h-1zM1174 522h1v7h-1zM1180 522h1v7h-1zM1186 510h1v6h-1zM1202 510h1v6h-1zM1208 510h1v6h-1zM1227 510h1v6h-1zM1230 510h1v6h-1zM1246 497h1v13h-1zM1249 510h1v6h-1zM1259 490h1v20h-1zM1265 497h1v13h-1zM1266 490h1v26h-1zM1269 510h1v6h-1zM1277 503h1v7h-1zM1282 510h1v6h-1zM1298 510h1v6h-1zM1300 497h1v13h-1zM1301 510h1v6h-1zM1306 503h1v13h-1zM1316 510h1v6h-1zM1318 503h1v13h-1zM1330 510h1v6h-1zM1333 510h1v6h-1zM1341 510h1v6h-1zM1348 522h1v7h-1zM1349 522h1v7h-1zM1360 503h1v13h-1zM1383 510h1v6h-1zM1393 510h1v6h-1zM1398 510h1v6h-1zM1402 503h1v7h-1zM1407 503h1v7h-1zM1410 510h1v6h-1zM1411 510h1v6h-1zM1419 503h1v7h-1zM1423 497h1v13h-1zM1434 510h1v6h-1zM1440 522h1v7h-1zM1444 510h1v6h-1zM1452 510h1v6h-1zM1454 522h1v7h-1zM1458 490h1v20h-1zM1460 497h1v19h-1zM1474 510h1v6h-1zM1481 522h1v7h-1zM1501 510h1v6h-1zM1518 510h1v6h-1zM1549 510h1v6h-1zM1551 503h1v13h-1zM1558 510h1v6h-1zM1563 510h1v6h-1zM1566 510h1v6h-1zM1572 510h1v6h-1zM1577 503h1v7h-1zM1579 510h1v6h-1zM1580 510h1v6h-1zM1586 510h1v6h-1zM1593 510h1v6h-1zM1614 510h1v6h-1zM1622 484h1v32h-1zM1625 522h1v7h-1zM1656 484h1v26h-1zM1664 522h1v7h-1zM1667 497h1v6h-1zM1721 490h1v20h-1zM1723 510h1v6h-1zM1731 503h1v7h-1zM1737 510h1v6h-1zM1743 510h1v6h-1zM1747 510h1v6h-1zM1749 503h1v7h-1zM1753 510h1v6h-1z" fill="#4472c4"/></svg>
<div class="a" style="right:1599px;top:566.0px;font-size:11px;line-height:15px;color:#4d4d4d;text-align:right">0</div>
<div class="a" style="right:1599px;top:502.5px;font-size:11px;line-height:15px;color:#4d4d4d;text-align:right">10000</div>
<div class="a" style="right:1599px;top:439.0px;font-size:11px;line-height:15px;color:#4d4d4d;text-align:right">20000</div>
<div class="a" style="right:1599px;top:375.5px;font-size:11px;line-height:15px;color:#4d4d4d;text-align:right">30000</div>
<div class="a" style="right:1599px;top:312.0px;font-size:11px;line-height:15px;color:#4d4d4d;text-align:right">40000</div>
<div class="a" style="right:1599px;top:248.5px;font-size:11px;line-height:15px;color:#4d4d4d;text-align:right">50000</div>
<div class="a" style="right:1599px;top:185.0px;font-size:11px;line-height:15px;color:#4d4d4d;text-align:right">60000</div>
<div class="a" style="left:240.06px;top:582px;width:0;height:0"><div style="position:absolute;right:0;top:0;transform-origin:100% 0;transform:rotate(-90deg) translate(0,-7px);font-size:11px;line-height:14px;color:#595959;white-space:nowrap">1</div></div>
<div class="a" style="left:254.93px;top:582px;width:0;height:0"><div style="position:absolute;right:0;top:0;transform-origin:100% 0;transform:rotate(-90deg) translate(0,-7px);font-size:11px;line-height:14px;color:#595959;white-space:nowrap">120</div></div>
<div class="a" style="left:269.80px;top:582px;width:0;height:0"><div style="position:absolute;right:0;top:0;transform-origin:100% 0;transform:rotate(-90deg) translate(0,-7px);font-size:11px;line-height:14px;color:#595959;white-space:nowrap">239</div></div>
<div class="a" style="left:284.67px;top:582px;width:0;height:0"><div style="position:absolute;right:0;top:0;transform-origin:100% 0;transform:rotate(-90deg) translate(0,-7px);font-size:11px;line-height:14px;color:#595959;white-space:nowrap">358</div></div>
<div class="a" style="left:299.53px;top:582px;width:0;height:0"><div style="position:absolute;right:0;top:0;transform-origin:100% 0;transform:rotate(-90deg) translate(0,-7px);font-size:11px;line-height:14px;color:#595959;white-space:nowrap">477</div></div>
<div class="a" style="left:314.40px;top:582px;width:0;height:0"><div style="position:absolute;right:0;top:0;transform-origin:100% 0;transform:rotate(-90deg) translate(0,-7px);font-size:11px;line-height:14px;color:#595959;white-space:nowrap">596</div></div>
<div class="a" style="left:329.27px;top:582px;width:0;height:0"><div style="position:absolute;right:0;top:0;transform-origin:100% 0;transform:rotate(-90deg) translate(0,-7px);font-size:11px;line-height:14px;color:#595959;white-space:nowrap">715</div></div>
<div class="a" style="left:344.14px;top:582px;width:0;height:0"><div style="position:absolute;right:0;top:0;transform-origin:100% 0;transform:rotate(-90deg) translate(0,-7px);font-size:11px;line-height:14px;color:#595959;white-space:nowrap">834</div></div>
<div class="a" style="left:359.01px;top:582px;width:0;height:0"><div style="position:absolute;right:0;top:0;transform-origin:100% 0;transform:rotate(-90deg) translate(0,-7px);font-size:11px;line-height:14px;color:#595959;white-space:nowrap">953</div></div>
<div class="a" style="left:373.87px;top:582px;width:0;height:0"><div style="position:absolute;right:0;top:0;transform-origin:100% 0;transform:rotate(-90deg) translate(0,-7px);font-size:11px;line-height:14px;color:#595959;white-space:nowrap">1072</div></div>
<div class="a" style="left:388.74px;top:582px;width:0;height:0"><div style="position:absolute;right:0;top:0;transform-origin:100% 0;transform:rotate(-90deg) translate(0,-7px);font-size:11px;line-height:14px;color:#595959;white-space:nowrap">1191</div></div>
<div class="a" style="left:403.61px;top:582px;width:0;height:0"><div style="position:absolute;right:0;top:0;transform-origin:100% 0;transform:rotate(-90deg) translate(0,-7px);font-size:11px;line-height:14px;color:#595959;white-space:nowrap">1310</div></div>
<div class="a" style="left:418.48px;top:582px;width:0;height:0"><div style="position:absolute;right:0;top:0;transform-origin:100% 0;transform:rotate(-90deg) translate(0,-7px);font-size:11px;line-height:14px;color:#595959;white-space:nowrap">1429</div></div>
<div class="a" style="left:433.34px;top:582px;width:0;height:0"><div style="position:absolute;right:0;top:0;transform-origin:100% 0;transform:rotate(-90deg) translate(0,-7px);font-size:11px;line-height:14px;color:#595959;white-space:nowrap">1548</div></div>
<div class="a" style="left:448.21px;top:582px;width:0;height:0"><div style="position:absolute;right:0;top:0;transform-origin:100% 0;transform:rotate(-90deg) translate(0,-7px);font-size:11px;line-height:14px;color:#595959;white-space:nowrap">1667</div></div>
<div class="a" style="left:463.08px;top:582px;width:0;height:0"><div style="position:absolute;right:0;top:0;transform-origin:100% 0;transform:rotate(-90deg) translate(0,-7px);font-size:11px;line-height:14px;color:#595959;white-space:nowrap">1786</div></div>
<div class="a" style="left:477.95px;top:582px;width:0;height:0"><div style="position:absolute;right:0;top:0;transform-origin:100% 0;transform:rotate(-90deg) translate(0,-7px);font-size:11px;line-height:14px;color:#595959;white-space:nowrap">1905</div></div>
<div class="a" style="left:492.82px;top:582px;width:0;height:0"><div style="position:absolute;right:0;top:0;transform-origin:100% 0;transform:rotate(-90deg) translate(0,-7px);font-size:11px;line-height:14px;color:#595959;white-space:nowrap">2024</div></div>
<div class="a" style="left:507.68px;top:582px;width:0;height:0"><div style="position:absolute;right:0;top:0;transform-origin:100% 0;transform:rotate(-90deg) translate(0,-7px);font-size:11px;line-height:14px;color:#595959;white-space:nowrap">2143</div></div>
<div class="a" style="left:522.55px;top:582px;width:0;height:0"><div style="position:absolute;right:0;top:0;transform-origin:100% 0;transform:rotate(-90deg) translate(0,-7px);font-size:11px;line-height:14px;color:#595959;white-space:nowrap">2262</div></div>
<div class="a" style="left:537.42px;top:582px;width:0;height:0"><div style="position:absolute;right:0;top:0;transform-origin:100% 0;transform:rotate(-90deg) translate(0,-7px);font-size:11px;line-height:14px;color:#595959;white-space:nowrap">2381</div></div>
<div class="a" style="left:552.29px;top:582px;width:0;height:0"><div style="position:absolute;right:0;top:0;transform-origin:100% 0;transform:rotate(-90deg) translate(0,-7px);font-size:11px;line-height:14px;color:#595959;white-space:nowrap">2500</div></div>
<div class="a" style="left:567.15px;top:582px;width:0;height:0"><div style="position:absolute;right:0;top:0;transform-origin:100% 0;transform:rotate(-90deg) translate(0,-7px);font-size:11px;line-height:14px;color:#595959;white-space:nowrap">2619</div></div>
<div class="a" style="left:582.02px;top:582px;width:0;height:0"><div style="position:absolute;right:0;top:0;transform-origin:100% 0;transform:rotate(-90deg) translate(0,-7px);font-size:11px;line-height:14px;color:#595959;white-space:nowrap">2738</div></div>
<div class="a" style="left:596.89px;top:582px;width:0;height:0"><div style="position:absolute;right:0;top:0;transform-origin:100% 0;transform:rotate(-90deg) translate(0,-7px);font-size:11px;line-height:14px;color:#595959;white-space:nowrap">2857</div></div>
<div class="a" style="left:611.76px;top:582px;width:0;height:0"><div style="position:absolute;right:0;top:0;transform-origin:100% 0;transform:rotate(-90deg) translate(0,-7px);font-size:11px;line-height:14px;color:#595959;white-space:nowrap">2976</div></div>
<div class="a" style="left:626.63px;top:582px;width:0;height:0"><div style="position:absolute;right:0;top:0;transform-origin:100% 0;transform:rotate(-90deg) translate(0,-7px);font-size:11px;line-height:14px;color:#595959;white-space:nowrap">3095</div></div>
<div class="a" style="left:641.49px;top:582px;width:0;height:0"><div style="position:absolute;right:0;top:0;transform-origin:100% 0;transform:rotate(-90deg) translate(0,-7px);font-size:11px;line-height:14px;color:#595959;white-space:nowrap">3214</div></div>
<div class="a" style="left:656.36px;top:582px;width:0;height:0"><div style="position:absolute;right:0;top:0;transform-origin:100% 0;transform:rotate(-90deg) translate(0,-7px);font-size:11px;line-height:14px;color:#595959;white-space:nowrap">3333</div></div>
<div class="a" style="left:671.23px;top:582px;width:0;height:0"><div style="position:absolute;right:0;top:0;transform-origin:100% 0;transform:rotate(-90deg) translate(0,-7px);font-size:11px;line-height:14px;color:#595959;white-space:nowrap">3452</div></div>
<div class="a" style="left:686.10px;top:582px;width:0;height:0"><div style="position:absolute;right:0;top:0;transform-origin:100% 0;transform:rotate(-90deg) translate(0,-7px);font-size:11px;line-height:14px;color:#595959;white-space:nowrap">3571</div></div>
<div class="a" style="left:700.96px;top:582px;width:0;height:0"><div style="position:absolute;right:0;top:0;transform-origin:100% 0;transform:rotate(-90deg) translate(0,-7px);font-size:11px;line-height:14px;color:#595959;white-space:nowrap">3690</div></div>
<div class="a" style="left:715.83px;top:582px;width:0;height:0"><div style="position:absolute;right:0;top:0;transform-origin:100% 0;transform:rotate(-90deg) translate(0,-7px);font-size:11px;line-height:14px;color:#595959;white-space:nowrap">3809</div></div>
<div class="a" style="left:730.70px;top:582px;width:0;height:0"><div style="position:absolute;right:0;top:0;transform-origin:100% 0;transform:rotate(-90deg) translate(0,-7px);font-size:11px;line-height:14px;color:#595959;white-space:nowrap">3928</div></div>
<div class="a" style="left:745.57px;top:582px;width:0;height:0"><div style="position:absolute;right:0;top:0;transform-origin:100% 0;transform:rotate(-90deg) translate(0,-7px);font-size:11px;line-height:14px;color:#595959;white-space:nowrap">4047</div></div>
<div class="a" style="left:760.44px;top:582px;width:0;height:0"><div style="position:absolute;right:0;top:0;transform-origin:100% 0;transform:rotate(-90deg) translate(0,-7px);font-size:11px;line-height:14px;color:#595959;white-space:nowrap">4166</div></div>
<div class="a" style="left:775.30px;top:582px;width:0;height:0"><div style="position:absolute;right:0;top:0;transform-origin:100% 0;transform:rotate(-90deg) translate(0,-7px);font-size:11px;line-height:14px;color:#595959;white-space:nowrap">4285</div></div>
<div class="a" style="left:790.17px;top:582px;width:0;height:0"><div style="position:absolute;right:0;top:0;transform-origin:100% 0;transform:rotate(-90deg) translate(0,-7px);font-size:11px;line-height:14px;color:#595959;white-space:nowrap">4404</div></div>
<div class="a" style="left:805.04px;top:582px;width:0;height:0"><div style="position:absolute;right:0;top:0;transform-origin:100% 0;transform:rotate(-90deg) translate(0,-7px);font-size:11px;line-height:14px;color:#595959;white-space:nowrap">4523</div></div>
<div class="a" style="left:819.91px;top:582px;width:0;height:0"><div style="position:absolute;right:0;top:0;transform-origin:100% 0;transform:rotate(-90deg) translate(0,-7px);font-size:11px;line-height:14px;color:#595959;white-space:nowrap">4642</div></div>
<div class="a" style="left:834.78px;top:582px;width:0;height:0"><div style="position:absolute;right:0;top:0;transform-origin:100% 0;transform:rotate(-90deg) translate(0,-7px);font-size:11px;line-height:14px;color:#595959;white-space:nowrap">4761</div></div>
<div class="a" style="left:849.64px;top:582px;width:0;height:0"><div style="position:absolute;right:0;top:0;transform-origin:100% 0;transform:rotate(-90deg) translate(0,-7px);font-size:11px;line-height:14px;color:#595959;white-space:nowrap">4880</div></div>
<div class="a" style="left:864.51px;top:582px;width:0;height:0"><div style="position:absolute;right:0;top:0;transform-origin:100% 0;transform:rotate(-90deg) translate(0,-7px);font-size:11px;line-height:14px;color:#595959;white-space:nowrap">4999</div></div>
<div class="a" style="left:879.38px;top:582px;width:0;height:0"><div style="position:absolute;right:0;top:0;transform-origin:100% 0;transform:rotate(-90deg) translate(0,-7px);font-size:11px;line-height:14px;color:#595959;white-space:nowrap">5118</div></div>
<div class="a" style="left:894.25px;top:582px;width:0;height:0"><div style="position:absolute;right:0;top:0;transform-origin:100% 0;transform:rotate(-90deg) translate(0,-7px);font-size:11px;line-height:14px;color:#595959;white-space:nowrap">5237</div></div>
<div class="a" style="left:909.11px;top:582px;width:0;height:0"><div style="position:absolute;right:0;top:0;transform-origin:100% 0;transform:rotate(-90deg) translate(0,-7px);font-size:11px;line-height:14px;color:#595959;white-space:nowrap">5356</div></div>
<div class="a" style="left:923.98px;top:582px;width:0;height:0"><div style="position:absolute;right:0;top:0;transform-origin:100% 0;transform:rotate(-90deg) translate(0,-7px);font-size:11px;line-height:14px;color:#595959;white-space:nowrap">5475</div></div>
<div class="a" style="left:938.85px;top:582px;width:0;height:0"><div style="position:absolute;right:0;top:0;transform-origin:100% 0;transform:rotate(-90deg) translate(0,-7px);font-size:11px;line-height:14px;color:#595959;white-space:nowrap">5594</div></div>
<div class="a" style="left:953.72px;top:582px;width:0;height:0"><div style="position:absolute;right:0;top:0;transform-origin:100% 0;transform:rotate(-90deg) translate(0,-7px);font-size:11px;line-height:14px;color:#595959;white-space:nowrap">5713</div></div>
<div class="a" style="left:968.59px;top:582px;width:0;height:0"><div style="position:absolute;right:0;top:0;transform-origin:100% 0;transform:rotate(-90deg) translate(0,-7px);font-size:11px;line-height:14px;color:#595959;white-space:nowrap">5832</div></div>
<div class="a" style="left:983.45px;top:582px;width:0;height:0"><div style="position:absolute;right:0;top:0;transform-origin:100% 0;transform:rotate(-90deg) translate(0,-7px);font-size:11px;line-height:14px;color:#595959;white-space:nowrap">5951</div></div>
<div class="a" style="left:998.32px;top:582px;width:0;height:0"><div style="position:absolute;right:0;top:0;transform-origin:100% 0;transform:rotate(-90deg) translate(0,-7px);font-size:11px;line-height:14px;color:#595959;white-space:nowrap">6070</div></div>
<div class="a" style="left:1013.19px;top:582px;width:0;height:0"><div style="position:absolute;right:0;top:0;transform-origin:100% 0;transform:rotate(-90deg) translate(0,-7px);font-size:11px;line-height:14px;color:#595959;white-space:nowrap">6189</div></div>
<div class="a" style="left:1028.06px;top:582px;width:0;height:0"><div style="position:absolute;right:0;top:0;transform-origin:100% 0;transform:rotate(-90deg) translate(0,-7px);font-size:11px;line-height:14px;color:#595959;white-space:nowrap">6308</div></div>
<div class="a" style="left:1042.92px;top:582px;width:0;height:0"><div style="position:absolute;right:0;top:0;transform-origin:100% 0;transform:rotate(-90deg) translate(0,-7px);font-size:11px;line-height:14px;color:#595959;white-space:nowrap">6427</div></div>
<div class="a" style="left:1057.79px;top:582px;width:0;height:0"><div style="position:absolute;right:0;top:0;transform-origin:100% 0;transform:rotate(-90deg) translate(0,-7px);font-size:11px;line-height:14px;color:#595959;white-space:nowrap">6546</div></div>
<div class="a" style="left:1072.66px;top:582px;width:0;height:0"><div style="position:absolute;right:0;top:0;transform-origin:100% 0;transform:rotate(-90deg) translate(0,-7px);font-size:11px;line-height:14px;color:#595959;white-space:nowrap">6665</div></div>
<div class="a" style="left:1087.53px;top:582px;width:0;height:0"><div style="position:absolute;right:0;top:0;transform-origin:100% 0;transform:rotate(-90deg) translate(0,-7px);font-size:11px;line-height:14px;color:#595959;white-space:nowrap">6784</div></div>
<div class="a" style="left:1102.40px;top:582px;width:0;height:0"><div style="position:absolute;right:0;top:0;transform-origin:100% 0;transform:rotate(-90deg) translate(0,-7px);font-size:11px;line-height:14px;color:#595959;white-space:nowrap">6903</div></div>
<div class="a" style="left:1117.26px;top:582px;width:0;height:0"><div style="position:absolute;right:0;top:0;transform-origin:100% 0;transform:rotate(-90deg) translate(0,-7px);font-size:11px;line-height:14px;color:#595959;white-space:nowrap">7022</div></div>
<div class="a" style="left:1132.13px;top:582px;width:0;height:0"><div style="position:absolute;right:0;top:0;transform-origin:100% 0;transform:rotate(-90deg) translate(0,-7px);font-size:11px;line-height:14px;color:#595959;white-space:nowrap">7141</div></div>
<div class="a" style="left:1147.00px;top:582px;width:0;height:0"><div style="position:absolute;right:0;top:0;transform-origin:100% 0;transform:rotate(-90deg) translate(0,-7px);font-size:11px;line-height:14px;color:#595959;white-space:nowrap">7260</div></div>
<div class="a" style="left:1161.87px;top:582px;width:0;height:0"><div style="position:absolute;right:0;top:0;transform-origin:100% 0;transform:rotate(-90deg) translate(0,-7px);font-size:11px;line-height:14px;color:#595959;white-space:nowrap">7379</div></div>
<div class="a" style="left:1176.74px;top:582px;width:0;height:0"><div style="position:absolute;right:0;top:0;transform-origin:100% 0;transform:rotate(-90deg) translate(0,-7px);font-size:11px;line-height:14px;color:#595959;white-space:nowrap">7498</div></div>
<div class="a" style="left:1191.60px;top:582px;width:0;height:0"><div style="position:absolute;right:0;top:0;transform-origin:100% 0;transform:rotate(-90deg) translate(0,-7px);font-size:11px;line-height:14px;color:#595959;white-space:nowrap">7617</div></div>
<div class="a" style="left:1206.47px;top:582px;width:0;height:0"><div style="position:absolute;right:0;top:0;transform-origin:100% 0;transform:rotate(-90deg) translate(0,-7px);font-size:11px;line-height:14px;color:#595959;white-space:nowrap">7736</div></div>
<div class="a" style="left:1221.34px;top:582px;width:0;height:0"><div style="position:absolute;right:0;top:0;transform-origin:100% 0;transform:rotate(-90deg) translate(0,-7px);font-size:11px;line-height:14px;color:#595959;white-space:nowrap">7855</div></div>
<div class="a" style="left:1236.21px;top:582px;width:0;height:0"><div style="position:absolute;right:0;top:0;transform-origin:100% 0;transform:rotate(-90deg) translate(0,-7px);font-size:11px;line-height:14px;color:#595959;white-space:nowrap">7974</div></div>
<div class="a" style="left:1251.07px;top:582px;width:0;height:0"><div style="position:absolute;right:0;top:0;transform-origin:100% 0;transform:rotate(-90deg) translate(0,-7px);font-size:11px;line-height:14px;color:#595959;white-space:nowrap">8093</div></div>
<div class="a" style="left:1265.94px;top:582px;width:0;height:0"><div style="position:absolute;right:0;top:0;transform-origin:100% 0;transform:rotate(-90deg) translate(0,-7px);font-size:11px;line-height:14px;color:#595959;white-space:nowrap">8212</div></div>
<div class="a" style="left:1280.81px;top:582px;width:0;height:0"><div style="position:absolute;right:0;top:0;transform-origin:100% 0;transform:rotate(-90deg) translate(0,-7px);font-size:11px;line-height:14px;color:#595959;white-space:nowrap">8331</div></div>
<div class="a" style="left:1295.68px;top:582px;width:0;height:0"><div style="position:absolute;right:0;top:0;transform-origin:100% 0;transform:rotate(-90deg) translate(0,-7px);font-size:11px;line-height:14px;color:#595959;white-space:nowrap">8450</div></div>
<div class="a" style="left:1310.55px;top:582px;width:0;height:0"><div style="position:absolute;right:0;top:0;transform-origin:100% 0;transform:rotate(-90deg) translate(0,-7px);font-size:11px;line-height:14px;color:#595959;white-space:nowrap">8569</div></div>
<div class="a" style="left:1325.41px;top:582px;width:0;height:0"><div style="position:absolute;right:0;top:0;transform-origin:100% 0;transform:rotate(-90deg) translate(0,-7px);font-size:11px;line-height:14px;color:#595959;white-space:nowrap">8688</div></div>
<div class="a" style="left:1340.28px;top:582px;width:0;height:0"><div style="position:absolute;right:0;top:0;transform-origin:100% 0;transform:rotate(-90deg) translate(0,-7px);font-size:11px;line-height:14px;color:#595959;white-space:nowrap">8807</div></div>
<div class="a" style="left:1355.15px;top:582px;width:0;height:0"><div style="position:absolute;right:0;top:0;transform-origin:100% 0;transform:rotate(-90deg) translate(0,-7px);font-size:11px;line-height:14px;color:#595959;white-space:nowrap">8926</div></div>
<div class="a" style="left:1370.02px;top:582px;width:0;height:0"><div style="position:absolute;right:0;top:0;transform-origin:100% 0;transform:rotate(-90deg) translate(0,-7px);font-size:11px;line-height:14px;color:#595959;white-space:nowrap">9045</div></div>
<div class="a" style="left:1384.88px;top:582px;width:0;height:0"><div style="position:absolute;right:0;top:0;transform-origin:100% 0;transform:rotate(-90deg) translate(0,-7px);font-size:11px;line-height:14px;color:#595959;white-space:nowrap">9164</div></div>
<div class="a" style="left:1399.75px;top:582px;width:0;height:0"><div style="position:absolute;right:0;top:0;transform-origin:100% 0;transform:rotate(-90deg) translate(0,-7px);font-size:11px;line-height:14px;color:#595959;white-space:nowrap">9283</div></div>
<div class="a" style="left:1414.62px;top:582px;width:0;height:0"><div style="position:absolute;right:0;top:0;transform-origin:100% 0;transform:rotate(-90deg) translate(0,-7px);font-size:11px;line-height:14px;color:#595959;white-space:nowrap">9402</div></div>
<div class="a" style="left:1429.49px;top:582px;width:0;height:0"><div style="position:absolute;right:0;top:0;transform-origin:100% 0;transform:rotate(-90deg) translate(0,-7px);font-size:11px;line-height:14px;color:#595959;white-space:nowrap">9521</div></div>
<div class="a" style="left:1444.36px;top:582px;width:0;height:0"><div style="position:absolute;right:0;top:0;transform-origin:100% 0;transform:rotate(-90deg) translate(0,-7px);font-size:11px;line-height:14px;color:#595959;white-space:nowrap">9640</div></div>
<div class="a" style="left:1459.22px;top:582px;width:0;height:0"><div style="position:absolute;right:0;top:0;transform-origin:100% 0;transform:rotate(-90deg) translate(0,-7px);font-size:11px;line-height:14px;color:#595959;white-space:nowrap">9759</div></div>
<div class="a" style="left:1474.09px;top:582px;width:0;height:0"><div style="position:absolute;right:0;top:0;transform-origin:100% 0;transform:rotate(-90deg) translate(0,-7px);font-size:11px;line-height:14px;color:#595959;white-space:nowrap">9878</div></div>
<div class="a" style="left:1488.96px;top:582px;width:0;height:0"><div style="position:absolute;right:0;top:0;transform-origin:100% 0;transform:rotate(-90deg) translate(0,-7px);font-size:11px;line-height:14px;color:#595959;white-space:nowrap">9997</div></div>
<div class="a" style="left:1503.83px;top:582px;width:0;height:0"><div style="position:absolute;right:0;top:0;transform-origin:100% 0;transform:rotate(-90deg) translate(0,-7px);font-size:11px;line-height:14px;color:#595959;white-space:nowrap">10116</div></div>
<div class="a" style="left:1518.69px;top:582px;width:0;height:0"><div style="position:absolute;right:0;top:0;transform-origin:100% 0;transform:rotate(-90deg) translate(0,-7px);font-size:11px;line-height:14px;color:#595959;white-space:nowrap">10235</div></div>
<div class="a" style="left:1533.56px;top:582px;width:0;height:0"><div style="position:absolute;right:0;top:0;transform-origin:100% 0;transform:rotate(-90deg) translate(0,-7px);font-size:11px;line-height:14px;color:#595959;white-space:nowrap">10354</div></div>
<div class="a" style="left:1548.43px;top:582px;width:0;height:0"><div style="position:absolute;right:0;top:0;transform-origin:100% 0;transform:rotate(-90deg) translate(0,-7px);font-size:11px;line-height:14px;color:#595959;white-space:nowrap">10473</div></div>
<div class="a" style="left:1563.30px;top:582px;width:0;height:0"><div style="position:absolute;right:0;top:0;transform-origin:100% 0;transform:rotate(-90deg) translate(0,-7px);font-size:11px;line-height:14px;color:#595959;white-space:nowrap">10592</div></div>
<div class="a" style="left:1578.17px;top:582px;width:0;height:0"><div style="position:absolute;right:0;top:0;transform-origin:100% 0;transform:rotate(-90deg) translate(0,-7px);font-size:11px;line-height:14px;color:#595959;white-space:nowrap">10711</div></div>
<div class="a" style="left:1593.03px;top:582px;width:0;height:0"><div style="position:absolute;right:0;top:0;transform-origin:100% 0;transform:rotate(-90deg) translate(0,-7px);font-size:11px;line-height:14px;color:#595959;white-space:nowrap">10830</div></div>
<div class="a" style="left:1607.90px;top:582px;width:0;height:0"><div style="position:absolute;right:0;top:0;transform-origin:100% 0;transform:rotate(-90deg) translate(0,-7px);font-size:11px;line-height:14px;color:#595959;white-space:nowrap">10949</div></div>
<div class="a" style="left:1622.77px;top:582px;width:0;height:0"><div style="position:absolute;right:0;top:0;transform-origin:100% 0;transform:rotate(-90deg) translate(0,-7px);font-size:11px;line-height:14px;color:#595959;white-space:nowrap">11068</div></div>
<div class="a" style="left:1637.64px;top:582px;width:0;height:0"><div style="position:absolute;right:0;top:0;transform-origin:100% 0;transform:rotate(-90deg) translate(0,-7px);font-size:11px;line-height:14px;color:#595959;white-space:nowrap">11187</div></div>
<div class="a" style="left:1652.51px;top:582px;width:0;height:0"><div style="position:absolute;right:0;top:0;transform-origin:100% 0;transform:rotate(-90deg) translate(0,-7px);font-size:11px;line-height:14px;color:#595959;white-space:nowrap">11306</div></div>
<div class="a" style="left:1667.37px;top:582px;width:0;height:0"><div style="position:absolute;right:0;top:0;transform-origin:100% 0;transform:rotate(-90deg) translate(0,-7px);font-size:11px;line-height:14px;color:#595959;white-space:nowrap">11425</div></div>
<div class="a" style="left:1682.24px;top:582px;width:0;height:0"><div style="position:absolute;right:0;top:0;transform-origin:100% 0;transform:rotate(-90deg) translate(0,-7px);font-size:11px;line-height:14px;color:#595959;white-space:nowrap">11544</div></div>
<div class="a" style="left:1697.11px;top:582px;width:0;height:0"><div style="position:absolute;right:0;top:0;transform-origin:100% 0;transform:rotate(-90deg) translate(0,-7px);font-size:11px;line-height:14px;color:#595959;white-space:nowrap">11663</div></div>
<div class="a" style="left:1711.98px;top:582px;width:0;height:0"><div style="position:absolute;right:0;top:0;transform-origin:100% 0;transform:rotate(-90deg) translate(0,-7px);font-size:11px;line-height:14px;color:#595959;white-space:nowrap">11782</div></div>
<div class="a" style="left:1726.84px;top:582px;width:0;height:0"><div style="position:absolute;right:0;top:0;transform-origin:100% 0;transform:rotate(-90deg) translate(0,-7px);font-size:11px;line-height:14px;color:#595959;white-space:nowrap">11901</div></div>
<div class="a" style="left:1741.71px;top:582px;width:0;height:0"><div style="position:absolute;right:0;top:0;transform-origin:100% 0;transform:rotate(-90deg) translate(0,-7px);font-size:11px;line-height:14px;color:#595959;white-space:nowrap">12020</div></div>
<div class="a" style="left:1756.58px;top:582px;width:0;height:0"><div style="position:absolute;right:0;top:0;transform-origin:100% 0;transform:rotate(-90deg) translate(0,-7px);font-size:11px;line-height:14px;color:#595959;white-space:nowrap">12139</div></div>
<div class="a" style="left:1771.45px;top:582px;width:0;height:0"><div style="position:absolute;right:0;top:0;transform-origin:100% 0;transform:rotate(-90deg) translate(0,-7px);font-size:11px;line-height:14px;color:#595959;white-space:nowrap">12258</div></div>
<div class="a" style="left:1786.32px;top:582px;width:0;height:0"><div style="position:absolute;right:0;top:0;transform-origin:100% 0;transform:rotate(-90deg) translate(0,-7px);font-size:11px;line-height:14px;color:#595959;white-space:nowrap">12377</div></div>
<div class="a" style="left:906px;top:628px;width:7px;height:7px;background:#4472c4"></div>
<div class="a" style="left:915px;top:624px;font-size:11px;line-height:15px;color:#595959;white-space:nowrap">In Flight micros</div>
<div class="a" style="left:1006px;top:628px;width:7px;height:7px;background:#ed7d31"></div>
<div class="a" style="left:1015px;top:624px;font-size:11px;line-height:15px;color:#595959;white-space:nowrap">In Queue micros</div>
</body></html>
